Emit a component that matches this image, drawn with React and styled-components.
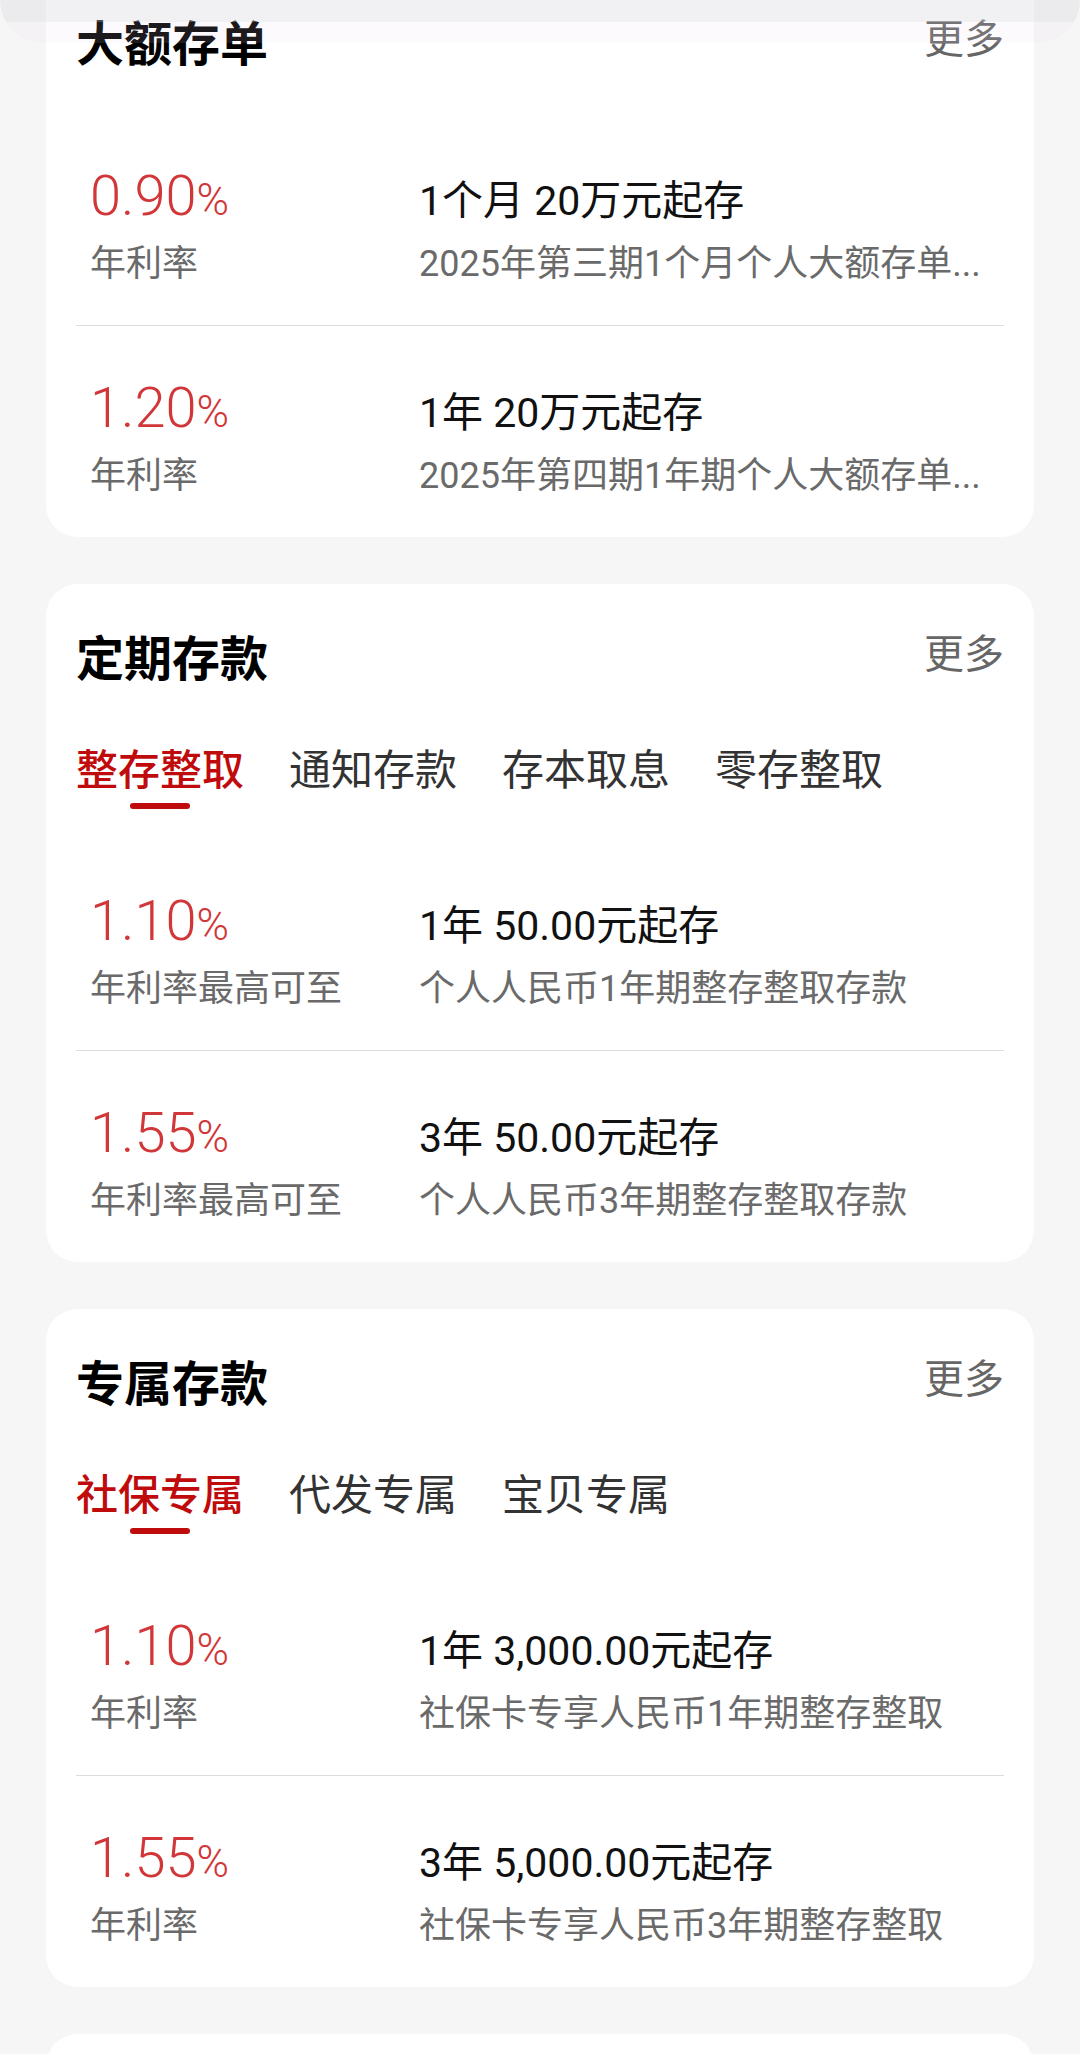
import styled, { createGlobalStyle } from 'styled-components'

const GlobalStyle = createGlobalStyle`
  body {
    margin: 0;
    background: #f6f6f6;
    font-family: Roboto, "Noto Sans CJK SC", sans-serif;
    color: #111;
  }
`

const Page = styled.div`
  display: flex;
  flex-direction: column;
  gap: 47px;
  padding: 0 46px;
  margin-top: -31px;
`

const TopFade = styled.div`
  position: fixed;
  top: 0;
  left: 0;
  right: 0;
  height: 43px;
  background: linear-gradient(rgba(215, 215, 220, 0.35) 0 22px, rgba(240, 215, 240, 0.12) 22px 43px);
  border-radius: 0 0 48px 48px;
  pointer-events: none;
  z-index: 2;
`

const Card = styled.section`
  display: flex;
  flex-direction: column;
  background: #fff;
  border-radius: 32px;
  padding: 0 30px;
  min-height: ${({ $stub }) => ($stub ? '200px' : 'auto')};
`

const Header = styled.div`
  display: flex;
  justify-content: space-between;
  align-items: flex-start;
  padding-top: 52px;
  margin-bottom: 45px;
`

const Title = styled.h2`
  margin: 0;
  font-size: 48px;
  line-height: 48px;
  font-weight: 700;
  color: #000;
`

const More = styled.span`
  font-size: 40px;
  line-height: 40px;
  color: #666;
  margin-top: -1px;
`

const Tabs = styled.div`
  display: flex;
  gap: 45px;
  margin-top: 18px;
  margin-bottom: 30px;
`

const Tab = styled.div`
  display: flex;
  flex-direction: column;
  align-items: center;
  font-size: 42px;
  line-height: 48px;
  color: ${({ $active }) => ($active ? '#bf0b0b' : '#333')};
  font-weight: ${({ $active }) => ($active ? 500 : 400)};

  &::after {
    content: '';
    width: 60px;
    height: 6px;
    margin-top: 8px;
    border-radius: 3px;
    background: ${({ $active }) => ($active ? '#bf0b0b' : 'transparent')};
  }
`

const Row = styled.div`
  display: grid;
  grid-template-columns: 329px minmax(0, 1fr);
  grid-template-rows: 64px 44px;
  row-gap: 14px;
  align-items: baseline;
  padding: 50px 14px 39px;

  & + & {
    border-top: 1px solid #dcdcdc;
  }
`

const Rate = styled.div`
  font-size: 56px;
  line-height: 64px;
  font-weight: 300;
  color: #d13638;
`

const Pct = styled.span`
  font-size: 44px;
`

const Amount = styled.div`
  font-size: 41px;
  line-height: 48px;
  color: #111;
  white-space: nowrap;
`

const Sub = styled.div`
  font-size: 36px;
  line-height: 44px;
  color: #6a6a6a;
  white-space: nowrap;
  overflow: hidden;
  text-overflow: ellipsis;
`

const sections = [
  {
    title: '大额存单',
    rows: [
      { rate: '0.90', label: '年利率', amount: '1个月 20万元起存', desc: '2025年第三期1个月个人大额存单...' },
      { rate: '1.20', label: '年利率', amount: '1年 20万元起存', desc: '2025年第四期1年期个人大额存单...' },
    ],
  },
  {
    title: '定期存款',
    tabs: ['整存整取', '通知存款', '存本取息', '零存整取'],
    rows: [
      { rate: '1.10', label: '年利率最高可至', amount: '1年 50.00元起存', desc: '个人人民币1年期整存整取存款' },
      { rate: '1.55', label: '年利率最高可至', amount: '3年 50.00元起存', desc: '个人人民币3年期整存整取存款' },
    ],
  },
  {
    title: '专属存款',
    tabs: ['社保专属', '代发专属', '宝贝专属'],
    rows: [
      { rate: '1.10', label: '年利率', amount: '1年 3,000.00元起存', desc: '社保卡专享人民币1年期整存整取' },
      { rate: '1.55', label: '年利率', amount: '3年 5,000.00元起存', desc: '社保卡专享人民币3年期整存整取' },
    ],
  },
]

function Section({ title, tabs, rows }) {
  return (
    <Card>
      <Header>
        <Title>{title}</Title>
        <More>更多</More>
      </Header>
      {tabs && (
        <Tabs>
          {tabs.map((t, i) => (
            <Tab key={t} $active={i === 0}>{t}</Tab>
          ))}
        </Tabs>
      )}
      {rows.map((r) => (
        <Row key={r.amount}>
          <Rate>
            {r.rate}
            <Pct>%</Pct>
          </Rate>
          <Amount>{r.amount}</Amount>
          <Sub>{r.label}</Sub>
          <Sub>{r.desc}</Sub>
        </Row>
      ))}
    </Card>
  )
}

export default function App() {
  return (
    <>
      <GlobalStyle />
      <TopFade />
      <Page>
        {sections.map((s) => (
          <Section key={s.title} {...s} />
        ))}
        <Card $stub />
      </Page>
    </>
  )
}
